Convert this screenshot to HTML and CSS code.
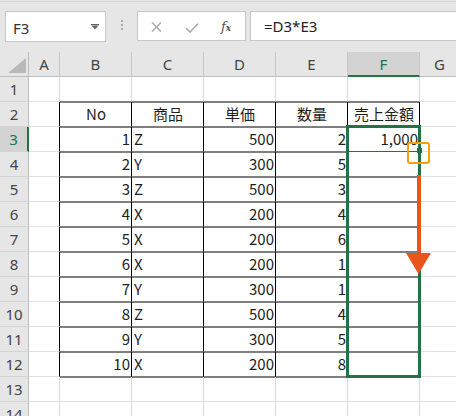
FILE: index.html
```html
<!DOCTYPE html>
<html lang="ja">
<head>
<meta charset="utf-8">
<title>Excel fill</title>
<link rel="stylesheet" href="styles.css">
</head>
<body>
<div class="app">
  <div class="toolbar">
    <div class="namebox"><span class="nb-text">F3</span><svg class="dd" width="8" height="6" viewBox="0 0 8 6"><rect x="0" y="0" width="8" height="1.2" fill="#666"/><path d="M0.5 1.5 L7.5 1.5 L4 5.5 Z" fill="#666"/></svg></div>
    <div class="grip"><i></i><i></i><i></i></div>
    <div class="fxbox">
      <svg class="ic-x" width="11" height="10" viewBox="0 0 11 10"><path d="M1 0.5 L10 9.5 M10 0.5 L1 9.5" stroke="#ababab" stroke-width="1.5" fill="none"/></svg>
      <svg class="ic-ok" width="14" height="10" viewBox="0 0 14 10"><path d="M1 5 L5 9 L13 0.8" stroke="#ababab" stroke-width="1.6" fill="none"/></svg>
      <span class="fx">f<span class="fx-x">x</span></span>
    </div>
    <div class="formula">=D3*E3</div>
  </div>

  <div class="sheet">
    <div class="grid">
      <!-- header -->
      <div class="ch corner"><svg class="tri" width="18" height="15" viewBox="0 0 18 15"><path d="M18 0 L18 15 L0 15 Z" fill="#b9b9b9"/></svg></div>
      <div class="ch">A</div><div class="ch">B</div><div class="ch">C</div><div class="ch">D</div><div class="ch">E</div><div class="ch sel">F</div><div class="ch">G</div>

      <!-- row 1 -->
      <div class="rh">1</div><div class="c"></div><div class="c tbot"></div><div class="c tbot"></div><div class="c tbot"></div><div class="c tbot"></div><div class="c tbot"></div><div class="c"></div>

      <!-- row 2 -->
      <div class="rh">2</div><div class="c edge"></div><div class="c t ctr">No</div><div class="c t ctr">商品</div><div class="c t ctr">単価</div><div class="c t ctr">数量</div><div class="c t ctr">売上金額</div><div class="c"></div>

      <!-- row 3 -->
      <div class="rh sel">3</div><div class="c edge"></div><div class="c t r">1</div><div class="c t l">Z</div><div class="c t r">500</div><div class="c t r">2</div><div class="c t r act">1,000</div><div class="c"></div>

      <div class="rh">4</div><div class="c edge"></div><div class="c t r">2</div><div class="c t l">Y</div><div class="c t r">300</div><div class="c t r">5</div><div class="c t r notop"></div><div class="c"></div>

      <div class="rh">5</div><div class="c edge"></div><div class="c t r">3</div><div class="c t l">Z</div><div class="c t r">500</div><div class="c t r">3</div><div class="c t r"></div><div class="c"></div>

      <div class="rh">6</div><div class="c edge"></div><div class="c t r">4</div><div class="c t l">X</div><div class="c t r">200</div><div class="c t r">4</div><div class="c t r"></div><div class="c"></div>

      <div class="rh">7</div><div class="c edge"></div><div class="c t r">5</div><div class="c t l">X</div><div class="c t r">200</div><div class="c t r">6</div><div class="c t r"></div><div class="c"></div>

      <div class="rh">8</div><div class="c edge"></div><div class="c t r">6</div><div class="c t l">X</div><div class="c t r">200</div><div class="c t r">1</div><div class="c t r"></div><div class="c"></div>

      <div class="rh">9</div><div class="c edge"></div><div class="c t r">7</div><div class="c t l">Y</div><div class="c t r">300</div><div class="c t r">1</div><div class="c t r"></div><div class="c"></div>

      <div class="rh">10</div><div class="c edge"></div><div class="c t r">8</div><div class="c t l">Z</div><div class="c t r">500</div><div class="c t r">4</div><div class="c t r"></div><div class="c"></div>

      <div class="rh">11</div><div class="c edge"></div><div class="c t r">9</div><div class="c t l">Y</div><div class="c t r">300</div><div class="c t r">5</div><div class="c t r"></div><div class="c"></div>

      <div class="rh">12</div><div class="c edge"></div><div class="c t r">10</div><div class="c t l">X</div><div class="c t r">200</div><div class="c t r">8</div><div class="c t r"></div><div class="c"></div>

      <!-- row 13 -->
      <div class="rh">13</div><div class="c"></div><div class="c ttop"></div><div class="c ttop"></div><div class="c ttop"></div><div class="c ttop"></div><div class="c ttop"></div><div class="c"></div>

      <!-- row 14 -->
      <div class="rh">14</div><div class="c"></div><div class="c"></div><div class="c"></div><div class="c"></div><div class="c"></div><div class="c"></div><div class="c"></div>
    </div>

    <div class="selbox"></div>
    <div class="handle"></div>
    <div class="hl"></div>
    <svg class="arrow" width="25" height="99" viewBox="0 0 25 99"><rect x="11" y="0" width="4" height="80" fill="#e9561b"/><path d="M0 78 L25 78 L12.5 99 Z" fill="#e9561b"/></svg>
  </div>
</div>
</body>
</html>
```

FILE: styles.css
```css
* { box-sizing: border-box; }

html, body {
  margin: 0;
  padding: 0;
}

body {
  width: 456px;
  height: 416px;
  overflow: hidden;
  background: #e6e6e6;
  font-family: "Noto Sans", "Liberation Sans", sans-serif;
}

.app {
  width: 456px;
  height: 416px;
  overflow: hidden;
}

/* ---------- toolbar ---------- */
.toolbar {
  height: 51px;
  margin-top: 1px;
  border-top: 1px solid #d4d4d4;
  padding: 9px 0 0 5px;
  display: flex;
  align-items: flex-start;
  white-space: nowrap;
}

.toolbar > * {
  flex: none;
}

.namebox {
  width: 101px;
  height: 31px;
  background: #fff;
  border: 1px solid #c8c8c8;
  display: flex;
  align-items: flex-start;
  padding: 6px 0 0 7px;
  position: relative;
}

.nb-text {
  font-size: 15px;
  line-height: 20px;
  color: #333;
}

.dd {
  position: absolute;
  right: 6px;
  top: 12px;
}

.grip {
  width: 2px;
  margin: 9px 14px 0 15px;
  display: flex;
  flex-direction: column;
  gap: 2px;
}

.grip i {
  display: block;
  width: 2px;
  height: 2px;
  background: #a9a9a9;
}

.fxbox {
  width: 109px;
  height: 30px;
  background: #fff;
  border: 1px solid #c8c8c8;
  display: flex;
  align-items: center;
  padding: 2px 0 0 13px;
}

.ic-ok {
  margin-left: 23px;
  margin-top: 2px;
}

.fx {
  margin-left: 22px;
  font-family: "DejaVu Serif", "Liberation Serif", serif;
  font-style: italic;
  font-size: 13px;
  color: #555;
  line-height: 14px;
}

.fx-x {
  font-size: 9px;
  font-weight: bold;
}

.formula {
  width: 230px;
  height: 30px;
  margin-left: 4px;
  background: #fff;
  border: 1px solid #c8c8c8;
  padding: 4px 0 0 13px;
  font-size: 15px;
  line-height: 20px;
  color: #222;
}

/* ---------- sheet ---------- */
.sheet {
  position: relative;
  height: 364px;
  overflow: hidden;
  background: #fff;
}

.grid {
  display: grid;
  grid-template-columns: 29px 31px 72px 72px 72px 72px 72px 40px;
  grid-auto-rows: 25px;
}

.ch {
  background: #e6e6e6;
  border-right: 1px solid #c8c8c8;
  border-bottom: 1px solid #bdbdbd;
  color: #444;
  font-size: 15px;
  line-height: 24px;
  text-align: center;
}

.ch.corner {
  position: relative;
  border-right-color: #bdbdbd;
}

.tri {
  position: absolute;
  right: 2px;
  bottom: 3px;
}

.ch.sel {
  background: #d3d3d3;
  color: #217346;
  border-bottom: 2px solid #217346;
}

.rh {
  background: #e6e6e6;
  border-right: 1px solid #bdbdbd;
  border-bottom: 1px solid #d4d4d4;
  color: #444;
  font-size: 15px;
  line-height: 24px;
  text-align: center;
}

.rh.sel {
  background: #d3d3d3;
  color: #217346;
  border-right: 2px solid #217346;
}

.c {
  background: #fff;
  border-right: 1px solid #dadada;
  border-bottom: 1px solid #e1e1e1;
  font-family: "Noto Sans CJK JP", "Noto Sans", sans-serif;
  font-size: 15px;
  line-height: 24px;
  color: #1e1e1e;
  padding: 0 1px 0 2px;
  white-space: nowrap;
  overflow: visible;
}

.c.edge {
  border-right-color: #000;
}

.c.tbot {
  border-bottom-color: #7f7f7f;
}

.c.ttop {
  box-shadow: inset 0 1px 0 #7f7f7f;
}

.c.t {
  border-right-color: #000;
  border-bottom-color: #7f7f7f;
  box-shadow: inset 0 1px 0 #7f7f7f;
}

.c.t.notop {
  box-shadow: none;
}

.c.t.act {
  border-bottom-color: #217346;
}

.r { text-align: right; }
.l { text-align: left; }
.ctr { text-align: center; }

/* ---------- overlays ---------- */
.selbox {
  position: absolute;
  left: 346px;
  top: 73px;
  width: 75px;
  height: 253px;
  border: 3px solid #217346;
}

.handle {
  position: absolute;
  left: 417px;
  top: 96px;
  width: 5px;
  height: 5px;
  background: #217346;
}

.hl {
  position: absolute;
  left: 407px;
  top: 90px;
  width: 23px;
  height: 22px;
  border: 2px solid #f5a00f;
  border-radius: 3px;
}

.arrow {
  position: absolute;
  left: 406px;
  top: 123px;
}
```
